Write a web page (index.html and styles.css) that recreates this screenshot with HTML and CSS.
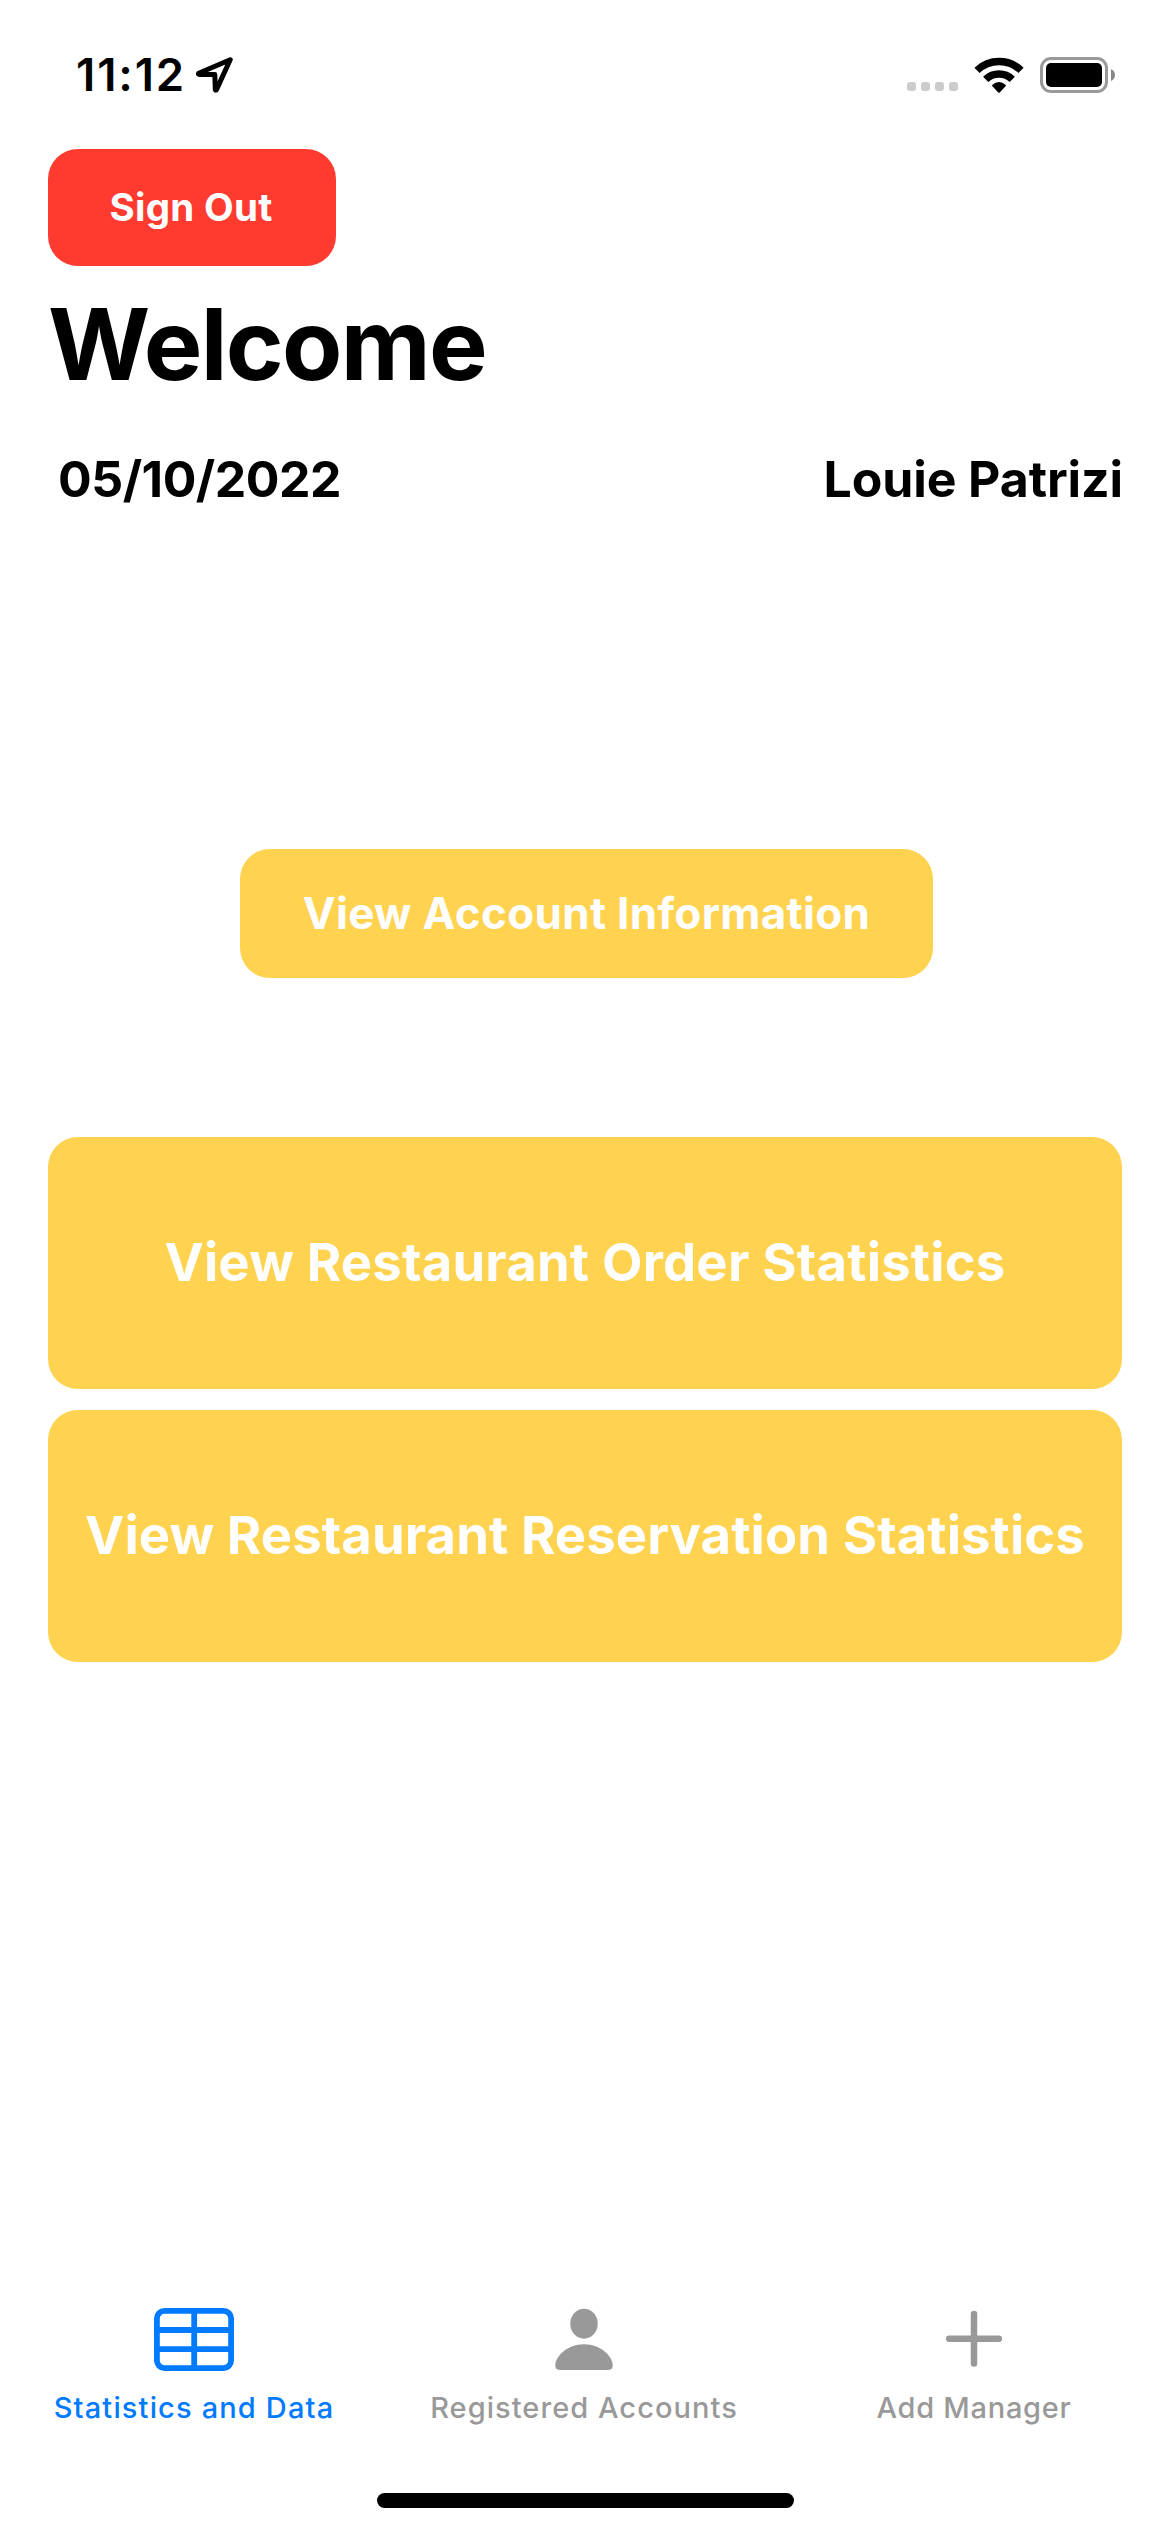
FILE: index.html
```html
<!DOCTYPE html>
<html lang="en">
<head>
<meta charset="utf-8">
<title>Welcome</title>
<link rel="stylesheet" href="styles.css">
</head>
<body>
<div class="screen">
  <header class="status-bar">
    <div class="status-left">
      <span class="time">11:12</span>
      <svg class="location" width="40" height="40" viewBox="0 0 40 40" aria-hidden="true">
        <path d="M36.2 4.7 L4.7 18.2 Q4 19.2 5 19.4 L20.8 19.6 L21.3 34.7 Q21.8 35.6 22.5 34.6 Z"/>
      </svg>
    </div>
    <div class="status-right">
      <div class="signal"><i></i><i></i><i></i><i></i></div>
      <svg class="wifi" width="50" height="38" viewBox="0 0 50 38" aria-hidden="true">
        <path class="arc" d="M3 14.3 A31.75 31.75 0 0 1 47 14.3"/>
        <path class="arc" d="M11.7 23.4 A19 19 0 0 1 38.3 23.4"/>
        <path d="M18.4 30.3 Q17.6 29.6 18.5 28.8 Q21.4 26 25 26 Q28.6 26 31.5 28.8 Q32.4 29.6 31.6 30.3 L25.7 36.4 Q25 37.1 24.3 36.4 Z"/>
      </svg>
      <svg class="battery" width="75" height="36" viewBox="0 0 75 36" aria-hidden="true">
        <rect class="shell" x="1.5" y="1.5" width="65" height="33" rx="9.5"/>
        <rect x="6" y="6" width="56" height="24" rx="5"/>
        <path class="nub" d="M71 12 Q75 14 75 18 Q75 22 71 24 Z"/>
      </svg>
    </div>
  </header>

  <main class="content">
    <button class="btn sign-out">Sign Out</button>
    <h1 class="title">Welcome</h1>
    <div class="info">
      <span class="date">05/10/2022</span>
      <span class="name">Louie Patrizi</span>
    </div>
    <button class="btn account">View Account Information</button>
    <div class="stats">
      <button class="btn stat">View Restaurant Order Statistics</button>
      <button class="btn stat stat-long">View Restaurant Reservation Statistics</button>
    </div>
  </main>

  <nav class="tabs">
    <a class="tab active">
      <svg width="80" height="64" viewBox="0 0 80 64" aria-hidden="true">
        <g fill="none" stroke="currentColor" stroke-width="5.8">
          <rect x="2.9" y="2.9" width="74.2" height="57.2" rx="7.5"/>
          <path d="M40.2 3V60M3 22H77M3 41.1H77"/>
        </g>
      </svg>
      <span class="label label-stats">Statistics and Data</span>
    </a>
    <a class="tab">
      <svg width="80" height="64" viewBox="0 0 80 64" aria-hidden="true">
        <ellipse cx="40" cy="15.7" rx="13.7" ry="15"/>
        <path d="M16.5 62 C13 62 11.3 60.3 11.3 57.4 C11.3 49 22.5 36.3 40 36.3 C57.5 36.3 68.7 49 68.7 57.4 C68.7 60.3 67 62 63.5 62 Z"/>
      </svg>
      <span class="label">Registered Accounts</span>
    </a>
    <a class="tab">
      <svg width="80" height="64" viewBox="0 0 80 64" aria-hidden="true">
        <path d="M40 5.9V55.5M15.2 30.7H64.8" fill="none" stroke="currentColor" stroke-width="6.5" stroke-linecap="round"/>
      </svg>
      <span class="label label-add">Add Manager</span>
    </a>
  </nav>
  <div class="home-indicator"></div>
</div>
</body>
</html>
```
FILE: styles.css
```css
* {
  box-sizing: border-box;
}

body {
  margin: 0;
  background: #fff;
  color: #000;
  font-family: Inter, "Liberation Sans", sans-serif;
}

.screen {
  width: 1170px;
  height: 2532px;
  display: flex;
  flex-direction: column;
  overflow: hidden;
}

.status-bar {
  height: 149px;
  padding: 0 55px 0 76px;
  display: flex;
  justify-content: space-between;
  align-items: center;
}

.status-left,
.status-right {
  display: flex;
  align-items: center;
}

.time {
  width: 118px;
  font-size: 45.5px;
  font-weight: 600;
  letter-spacing: 1.9px;
}

.location {
  fill: none;
  stroke: #000;
  stroke-width: 5px;
  stroke-linejoin: round;
}

.signal {
  display: flex;
  gap: 5px;
  margin: 24px 16px 0 0;
}

.signal i {
  width: 9px;
  height: 9px;
  border-radius: 3px;
  background: #ccc;
}

.wifi {
  margin-right: 16px;
}

.arc {
  fill: none;
  stroke: #000;
  stroke-width: 7.4px;
}

.shell {
  fill: none;
  stroke: #999;
  stroke-width: 3px;
}

.nub {
  fill: #888;
}

.content {
  flex: 1;
  padding: 0 48px;
  display: flex;
  flex-direction: column;
  align-items: center;
}

.btn {
  border: 0;
  padding: 0;
  border-radius: 30px;
  background: #ffd250;
  color: #fff;
  font-family: inherit;
  font-weight: 700;
  white-space: nowrap;
}

.sign-out {
  align-self: flex-start;
  width: 288px;
  height: 117px;
  padding: 0 2px 1px 0;
  background: #ff3b30;
  font-size: 38.5px;
  letter-spacing: 0.3px;
}

.title {
  align-self: flex-start;
  margin: 0;
  font-size: 98.5px;
  line-height: 158px;
  font-weight: 700;
  letter-spacing: -1.65px;
}

.info {
  align-self: stretch;
  padding-left: 10px;
  display: flex;
  justify-content: space-between;
  font-size: 50px;
  line-height: 110px;
  font-weight: 700;
}

.date {
  letter-spacing: -0.5px;
}

.name {
  margin-right: -1px;
  letter-spacing: -0.1px;
}

.account {
  width: 693px;
  height: 129px;
  margin: 315px 0 159px 3px;
  padding-bottom: 1px;
  font-size: 44px;
  letter-spacing: 0.32px;
}

.stats {
  align-self: stretch;
  display: grid;
  gap: 21px;
}

.stat {
  height: 252px;
  padding-bottom: 2px;
  font-size: 52.5px;
  letter-spacing: 0.24px;
}

.stat-long {
  letter-spacing: 0.13px;
}

.tabs {
  width: 1170px;
  height: 185px;
  margin-left: -1px;
  display: grid;
  grid-template-columns: repeat(3, 1fr);
}

.tab {
  display: flex;
  flex-direction: column;
  align-items: center;
  gap: 15px;
  color: #999;
}

.tab svg {
  fill: currentColor;
}

.active {
  color: #007aff;
}

.label {
  font-size: 29px;
  line-height: 41px;
  font-weight: 500;
  letter-spacing: 1.05px;
}

.label-stats {
  letter-spacing: 1.15px;
}

.label-add {
  letter-spacing: 0.72px;
}

.home-indicator {
  align-self: center;
  width: 417px;
  height: 15px;
  margin-bottom: 24px;
  border-radius: 8px;
  background: #000;
}
```
